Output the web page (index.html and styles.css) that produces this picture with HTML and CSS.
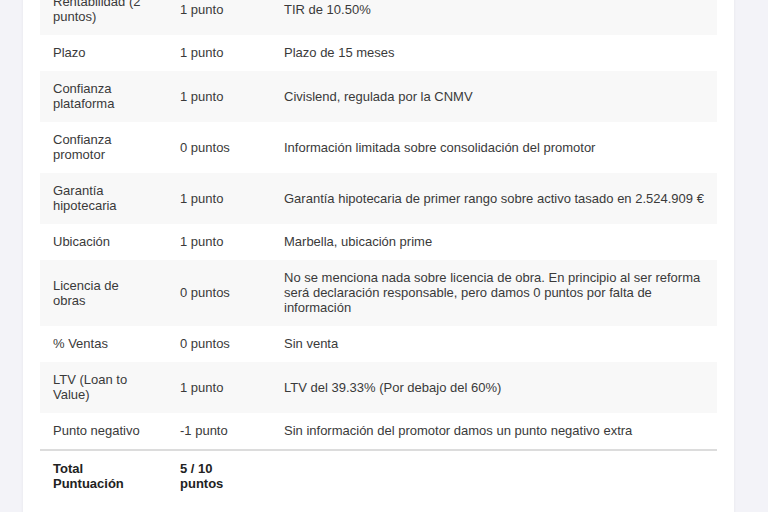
FILE: index.html
```html
<!DOCTYPE html>
<html lang="es">
<head>
  <meta charset="utf-8">
  <title>Puntuación del proyecto</title>
  <link rel="stylesheet" href="styles.css">
</head>
<body>
  <div class="card">
    <table class="score">
      <tr>
        <td class="crit">Rentabilidad (2 puntos)</td>
        <td class="pts">1 punto</td>
        <td>TIR de 10.50%</td>
      </tr>
      <tr>
        <td class="crit">Plazo</td>
        <td class="pts">1 punto</td>
        <td>Plazo de 15 meses</td>
      </tr>
      <tr>
        <td class="crit">Confianza plataforma</td>
        <td class="pts">1 punto</td>
        <td>Civislend, regulada por la CNMV</td>
      </tr>
      <tr>
        <td class="crit">Confianza promotor</td>
        <td class="pts">0 puntos</td>
        <td>Información limitada sobre consolidación del promotor</td>
      </tr>
      <tr>
        <td class="crit">Garantía hipotecaria</td>
        <td class="pts">1 punto</td>
        <td>Garantía hipotecaria de primer rango sobre activo tasado en 2.524.909 €</td>
      </tr>
      <tr>
        <td class="crit">Ubicación</td>
        <td class="pts">1 punto</td>
        <td>Marbella, ubicación prime</td>
      </tr>
      <tr>
        <td class="crit">Licencia de obras</td>
        <td class="pts">0 puntos</td>
        <td>No se menciona nada sobre licencia de obra. En principio al ser reforma será declaración responsable, pero damos 0 puntos por falta de información</td>
      </tr>
      <tr>
        <td class="crit">% Ventas</td>
        <td class="pts">0 puntos</td>
        <td>Sin venta</td>
      </tr>
      <tr>
        <td class="crit">LTV (Loan to Value)</td>
        <td class="pts">1 punto</td>
        <td>LTV del 39.33% (Por debajo del 60%)</td>
      </tr>
      <tr>
        <td class="crit">Punto negativo</td>
        <td class="pts">-1 punto</td>
        <td>Sin información del promotor damos un punto negativo extra</td>
      </tr>
      <tr class="total">
        <td class="crit">Total Puntuación</td>
        <td class="pts">5 / 10 puntos</td>
        <td></td>
      </tr>
    </table>
  </div>
</body>
</html>
```

FILE: styles.css
```css
html, body {
  margin: 0;
  padding: 0;
  background-color: #f3f3f8;
  font-family: "Liberation Sans", Arial, sans-serif;
  font-size: 13px;
  color: #3a3a3a;
}

.card {
  width: 677px;
  margin-left: 23px;
  padding: 0 17px 40px 17px;
  background-color: #fff;
  box-shadow: 0 0 3px rgba(0,0,0,0.06);
  min-height: 512px;
}

.score {
  width: 677px;
  border-collapse: collapse;
  margin-top: -16px;
}

.score td {
  padding: 10px 13px 11px 13px;
  line-height: 15px;
  vertical-align: middle;
}

.score tr:nth-child(odd) {
  background-color: #f8f8f8;
}

.crit {
  width: 101px;
}

.pts {
  width: 78px;
}

.score tr.total {
  background-color: #fff;
  border-top: 2px solid #dcdcdc;
  font-weight: bold;
  color: #222;
}

.score tr.total td {
  padding-top: 10px;
  padding-bottom: 16px;
  vertical-align: top;
}
```
